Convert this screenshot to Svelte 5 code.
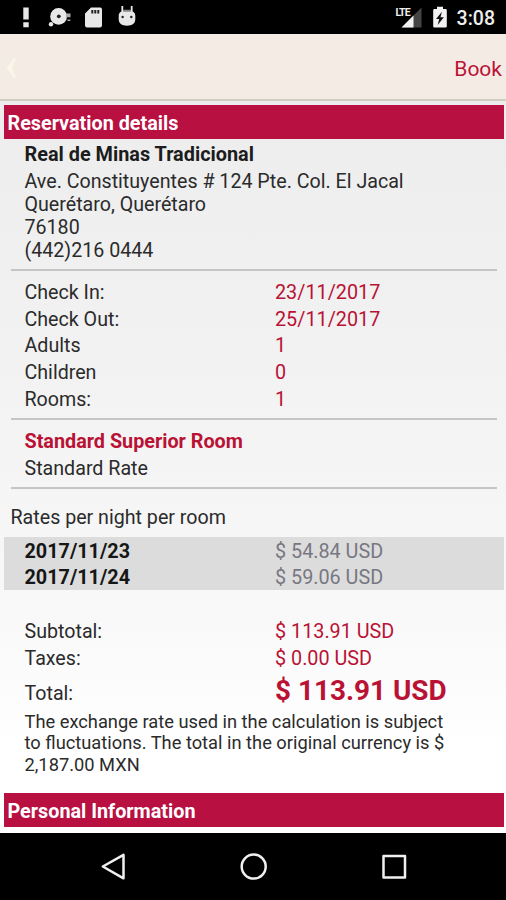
<script>
  const address = ['Ave. Constituyentes # 124 Pte. Col. El Jacal', 'Querétaro, Querétaro', '76180', '(442)216 0444'];
  const stay = [
    ['Check In:', '23/11/2017'],
    ['Check Out:', '25/11/2017'],
    ['Adults', '1'],
    ['Children', '0'],
    ['Rooms:', '1']
  ];
  const nights = [
    ['2017/11/23', '$ 54.84 USD'],
    ['2017/11/24', '$ 59.06 USD']
  ];
  const totals = [
    ['Subtotal:', '$ 113.91 USD'],
    ['Taxes:', '$ 0.00 USD']
  ];
  const note = ['The exchange rate used in the calculation is subject', 'to fluctuations. The total in the original currency is $', '2,187.00 MXN'];
</script>

<div class="screen">
  <div class="status">
    <svg class="left" width="150" height="34" viewBox="0 0 150 34" fill="#e8e8e8">
      <path d="M23.3 7.5h5.4v12h-5.4zM23.3 22.3h5.4v5h-5.4z" />
      <circle cx="58.6" cy="16.4" r="8.4" />
      <circle cx="51" cy="24.2" r="2.2" />
      <path d="M66 13.5h4.5v3.8H66zM67.5 19.5h2.8v1.6h-2.8z" fill="#aaa" />
      <circle cx="58.8" cy="16.3" r="1.9" fill="#222" />
      <path d="M91 7.6h9.2a1.8 1.8 0 0 1 1.8 1.8v16.2a1.8 1.8 0 0 1-1.8 1.8H86.8a1.8 1.8 0 0 1-1.8-1.8V13.4z" />
      <path d="M91.3 10h2v3.5h-2zM94.3 10h2v3.5h-2zM97.3 10h2v3.5h-2z" fill="#222" />
      <path d="M121.4 6h1.8v4.5h7.600V6h1.800v5.500c2 .8 2.700 2.300 2.700 4.500v3c0 4.500-3 6.700-8.300 6.700s-8.300-2.200-8.300-6.700v-3c0-2.200.7-3.700 2.700-4.500z" />
      <path d="M123.200 9.800h7.600v2h-7.600z" fill="#888" />
      <circle cx="122.600" cy="17" r="1.200" fill="#222" />
      <circle cx="131.300" cy="17" r="1.200" fill="#222" />
    </svg>
    <div class="right">
      <div class="signal">
        <svg width="28" height="34" viewBox="0 0 28 34">
          <path d="M25.500 7.500V27.500H5.500z" fill="#444" />
          <path d="M17.500 15.500V27.500H5.500z" fill="#f2f2f2" />
        </svg>
        <span class="lte">LTE</span>
      </div>
      <svg class="battery" width="14" height="34" viewBox="0 0 14 34">
        <path d="M4 6.700h6V9h2.500a1.300 1.300 0 0 1 1.300 1.300v16a1.300 1.300 0 0 1-1.300 1.300h-11A1.300 1.300 0 0 1 .2 26.300v-16A1.300 1.300 0 0 1 1.500 9H4z" fill="#f2f2f2" />
        <path d="M8.900 11.700 3 19h3.200l-1.500 5.900 6.200-7.700H7.500z" fill="#111" />
      </svg>
      <span class="clock">3:08</span>
    </div>
  </div>

  <header>
    <svg width="12" height="24" viewBox="0 0 12 24" fill="#fbf7e8"><path d="M8 2h2L6 12l4 10H8L.8 12z" /></svg>
    <span>Book</span>
  </header>

  <main>
    <h2>Reservation details</h2>
    <section class="hotel">
      <h3>Real de Minas Tradicional</h3>
      {#each address as line}<p>{line}</p>{/each}
    </section>
    <hr />
    <section class="stay">
      {#each stay as [label, value]}
        <div class="row"><span>{label}</span><span class="value">{value}</span></div>
      {/each}
    </section>
    <hr />
    <section class="room">
      <div class="row strong red">Standard Superior Room</div>
      <div class="row">Standard Rate</div>
    </section>
    <hr />
    <div class="caption">Rates per night per room</div>
    <section class="nights">
      {#each nights as [label, value]}
        <div class="row"><span class="strong">{label}</span><span class="value">{value}</span></div>
      {/each}
    </section>
    <section class="totals">
      {#each totals as [label, value]}
        <div class="row"><span>{label}</span><span class="value">{value}</span></div>
      {/each}
      <div class="row total"><span>Total:</span><span class="value">$ 113.91 USD</span></div>
    </section>
    <section class="note">
      {#each note as line}<p>{line}</p>{/each}
    </section>
    <h2>Personal Information</h2>
  </main>

  <nav>
    <svg width="506" height="67" viewBox="0 0 506 67" fill="none" stroke="#f0f0f0" stroke-width="2.5" stroke-linejoin="round">
      <path d="M123.500 21.800v23.500L102.800 33.500z" />
      <circle cx="253.700" cy="33.600" r="12" />
      <rect x="383.500" y="23" width="21.500" height="21.500" />
    </svg>
  </nav>
</div>

<style>
  :global(body) { margin: 0; background: #000; }
  .screen {
    width: 506px; height: 900px; overflow: hidden;
    display: flex; flex-direction: column;
    font-family: Roboto, "Liberation Sans", sans-serif;
    font-size: 19.65px; color: #2b2b2b;
  }
  svg { display: block; flex: none; }
  .status { height: 34px; flex: none; background: #000; display: flex; justify-content: space-between; }
  .right { display: flex; padding-right: 11px; }
  .signal { position: relative; width: 37px; }
  .lte {
    position: absolute; left: 0; top: 7px;
    font-size: 10.5px; line-height: 11px; font-weight: 700; letter-spacing: -1px; color: #eee;
  }
  .battery { margin-right: 10px; }
  .clock { line-height: 37px; font-size: 19.5px; font-weight: 500; color: #eee; }
  header {
    height: 65px; flex: none; padding: 0 4px 0 6px; border-bottom: 2px solid #d2cdc2;
    background: #f4ece4; display: flex; align-items: center; justify-content: space-between;
  }
  header span { font-size: 21px; line-height: 24px; color: #bb1238; padding-top: 4px; }
  header svg { margin-top: 3px; }
  main {
    height: 732px; flex: none; padding: 4px 2.5px 0 3.5px; box-sizing: border-box;
    background: linear-gradient(#ededed, #f2f2f2 36%, #f9f9f9 72%, #ffffff 88%);
  }
  h2 {
    margin: 0; height: 34px; line-height: 37px; padding-left: 4px;
    background: #b81041; color: #fff; font-size: 19.8px; font-weight: 700;
  }
  h3 { margin: 0; font-size: 19.85px; line-height: 31px; height: 30.5px; font-weight: 700; color: #1c1c1c; }
  p { margin: 0; white-space: nowrap; }
  section { padding-left: 21px; }
  .hotel p { line-height: 23px; }
  .hotel { height: 130px; }
  hr { margin: 0 6.5px 0 7px; border: 0; height: 2px; background: #c5c5c5; }
  .row { height: 26.7px; line-height: 26.7px; display: flex; white-space: nowrap; }
  .row > span:first-child { width: 250.5px; flex: none; }
  .strong { font-weight: 700; font-size: 19.8px; color: #161616; }
  .value, .red { color: #b91235; }
  .value { font-size: 19.8px; }
  .stay { padding-top: 9px; height: 147px; box-sizing: border-box; }
  .room { padding-top: 9px; height: 67px; box-sizing: border-box; }
  .caption { height: 48px; line-height: 57px; padding-left: 7px; box-sizing: border-box; }
  .nights { height: 53px; padding-top: 1.5px; box-sizing: border-box; background: #dcdcdc; }
  .nights .value { color: #777782; }
  .totals { padding-top: 29px; height: 121px; box-sizing: border-box; }
  .row.total { height: 38px; line-height: 43px; }
  .total .value { font-size: 27.9px; font-weight: 700; line-height: 38px; }
  .note { height: 82px; font-size: 18.3px; }
  .note p { line-height: 21.4px; }
  nav { height: 67px; flex: none; background: #000; }
</style>
